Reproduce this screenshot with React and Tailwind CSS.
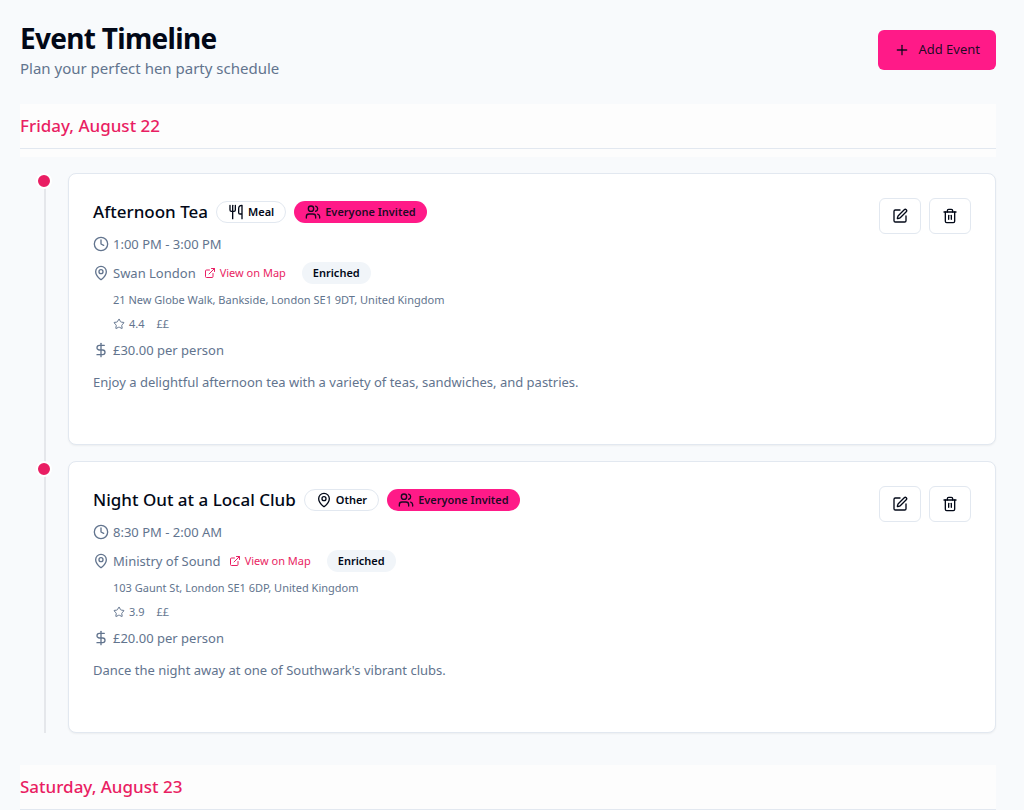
import React from 'react';
import { Plus, Utensils, MapPin, Users, Clock, ExternalLink, Star, DollarSign, SquarePen, Trash2 } from 'lucide-react';

const days = [
    {
        label: 'Friday, August 22',
        events: [
            {
                title: 'Afternoon Tea',
                type: 'Meal',
                time: '1:00 PM - 3:00 PM',
                venue: 'Swan London',
                address: '21 New Globe Walk, Bankside, London SE1 9DT, United Kingdom',
                rating: '4.4',
                priceLevel: '££',
                cost: '£30.00 per person',
                notes: 'Enjoy a delightful afternoon tea with a variety of teas, sandwiches, and pastries.',
            },
            {
                title: 'Night Out at a Local Club',
                type: 'Other',
                time: '8:30 PM - 2:00 AM',
                venue: 'Ministry of Sound',
                address: '103 Gaunt St, London SE1 6DP, United Kingdom',
                rating: '3.9',
                priceLevel: '££',
                cost: '£20.00 per person',
                notes: "Dance the night away at one of Southwark's vibrant clubs.",
            },
        ],
    },
    { label: 'Saturday, August 23', events: [] },
];

const typeIcons = { Meal: Utensils, Other: MapPin };

const EventCard = ({ event }) => {
    const TypeIcon = typeIcons[event.type];

    return (
        <li className="relative pl-12">
            <span className="absolute left-4 top-0 size-4 rounded-full border-2 border-white bg-[#e91e63]" />
            <article className="flex items-start justify-between rounded-lg border border-slate-200 bg-white p-6 pb-13 shadow-xs">
                <div className="flex flex-col gap-2 text-slate-500">
                    <div className="flex h-7 items-center gap-2">
                        <h3 className="text-[17px] font-medium text-[#020817]">{event.title}</h3>
                        <span className="flex h-[22px] items-center gap-1 rounded-full border border-slate-200 px-[11px] text-[11px] font-semibold text-[#020817]">
                            <TypeIcon size={16} />
                            {event.type}
                        </span>
                        <span className="flex h-[22px] items-center gap-1 rounded-full bg-[#ff1a88] px-[11px] text-[11px] font-semibold text-[#020817]/90">
                            <Users size={16} />
                            Everyone Invited
                        </span>
                    </div>
                    <p className="flex items-center gap-1 text-[13px] leading-5">
                        <Clock size={16} />
                        {event.time}
                    </p>
                    <div className="flex items-center text-[13px] leading-5">
                        <MapPin size={16} />
                        <span className="ml-1">{event.venue}</span>
                        <a href="#map" className="ml-2 flex items-center gap-1 text-[11px] text-[#e91e63]">
                            <ExternalLink size={12} />
                            View on Map
                        </a>
                        <span className="ml-4 flex h-[22px] items-center rounded-full bg-slate-100 px-[11px] text-[11px] font-semibold text-[#020817]">
                            Enriched
                        </span>
                    </div>
                    <p className="ml-5 text-[11px] leading-4">{event.address}</p>
                    <div className="ml-5 flex items-center gap-3 text-[11px] leading-4">
                        <span className="flex items-center gap-1">
                            <Star size={12} />
                            {event.rating}
                        </span>
                        <span>{event.priceLevel}</span>
                    </div>
                    <p className="flex items-center gap-1 text-[13px] leading-5">
                        <DollarSign size={16} />
                        {event.cost}
                    </p>
                    <p className="mt-1 text-[13px] leading-5">{event.notes}</p>
                </div>
                <div className="flex gap-2 text-[#020817]">
                    <button aria-label="Edit event" className="flex h-9 w-[42px] items-center justify-center rounded-md border border-slate-200 bg-white">
                        <SquarePen size={16} />
                    </button>
                    <button aria-label="Delete event" className="flex h-9 w-[42px] items-center justify-center rounded-md border border-slate-200 bg-white">
                        <Trash2 size={16} />
                    </button>
                </div>
            </article>
        </li>
    );
};

export default function App() {
    return (
        <main className="min-h-screen bg-slate-50 pt-5 pr-7 pl-5 font-['Noto_Sans','Open_Sans',sans-serif]">
            <header className="mb-6 flex items-center justify-between">
                <div>
                    <h1 className="text-[28px] leading-9 font-bold tracking-tight text-[#020817]">Event Timeline</h1>
                    <p className="text-[15px] leading-6 text-slate-500">Plan your perfect hen party schedule</p>
                </div>
                <button className="flex h-10 items-center gap-2 rounded-md bg-[#ff1a88] px-4 text-[13px] text-[#020817]/90">
                    <Plus size={16} />
                    Add Event
                </button>
            </header>

            <div className="flex flex-col gap-8">
                {days.map((day) => (
                    <section key={day.label}>
                        <div className="bg-[#fdfdfd] py-2">
                            <h2 className="border-b border-slate-200 pb-2 text-[17px] leading-7 font-medium text-[#e91e63]">{day.label}</h2>
                        </div>
                        {day.events.length > 0 && (
                            <div className="relative mt-4">
                                <div className="absolute inset-y-0 left-6 w-0.5 bg-gray-200" />
                                <ul className="flex flex-col gap-4">
                                    {day.events.map((event) => (
                                        <EventCard key={event.title} event={event} />
                                    ))}
                                </ul>
                            </div>
                        )}
                    </section>
                ))}
            </div>
        </main>
    );
}
